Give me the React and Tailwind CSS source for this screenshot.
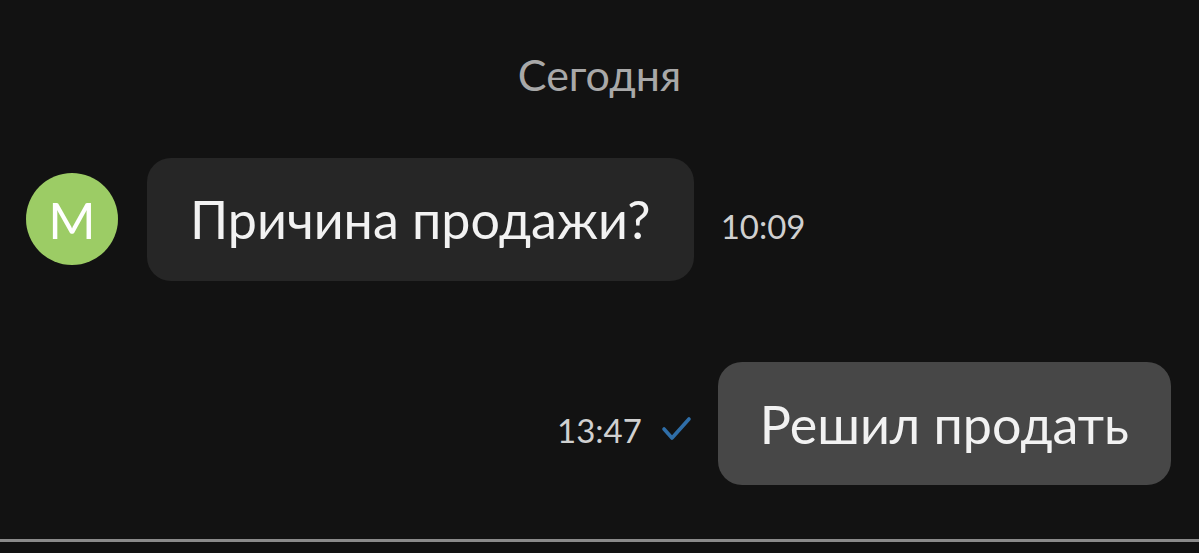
export default function App() {
  return (
    <div className="w-[1199px] h-[553px] bg-[#121212] flex flex-col overflow-hidden" style={{ fontFamily: 'Lato, "Noto Sans", sans-serif' }}>
      <div className="h-[539px] flex flex-col">
        <div className="h-[150px] pt-[49px] text-center text-[43px] leading-[52px] text-[#a8a8a8]">Сегодня</div>
        <div className="flex items-center h-[130px] pl-[26px] mt-[4px]">
          <div className="w-[92px] h-[92px] rounded-full bg-[#9ccc65] flex items-center justify-center text-white text-[51px] leading-none">M</div>
          <div className="ml-[29px] h-[123px] px-[43px] rounded-[24px] bg-[#262626] flex items-center text-[52px] text-[#f2f2f2]">Причина продажи?</div>
          <div className="ml-[27px] mt-[16px] text-[33px] text-[#d0d0d0]">10:09</div>
        </div>
        <div className="flex items-center justify-end h-[123px] mt-[78px] pr-[28px]">
          <div className="text-[33px] text-[#d0d0d0] mt-[14px]">13:47</div>
          <svg className="ml-[19px] mt-[10px]" width="31" height="28" viewBox="0 0 31 28" fill="none">
            <path d="M3 14 L11 23 L28 4" stroke="#2f6ea8" strokeWidth="3.6" strokeLinecap="round" strokeLinejoin="round" />
          </svg>
          <div className="ml-[26px] h-[123px] px-[42px] rounded-[24px] bg-[#474747] flex items-center text-[52px] text-[#f2f2f2]">Решил продать</div>
        </div>
      </div>
      <div className="h-[3px] bg-[#8a8a8a]"></div>
      <div className="flex-1 bg-[#111111]"></div>
    </div>
  );
}
